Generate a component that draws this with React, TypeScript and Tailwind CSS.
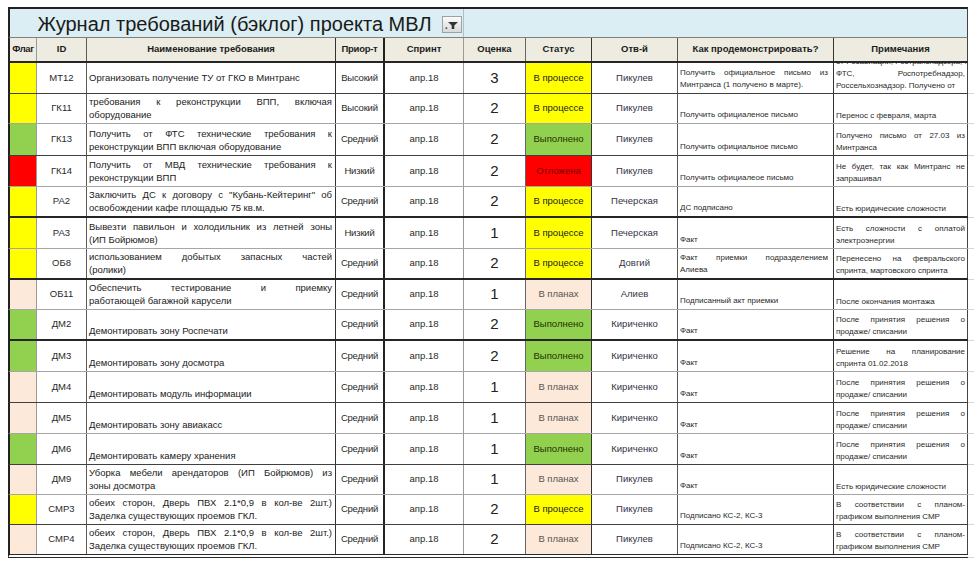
import React from "react";

type Row = {
  flag: string;
  id: string;
  name: string[];
  nameEnd?: boolean;
  prio: string;
  score: string;
  status: string;
  owner: string;
  demo: string[];
  note: string[];
  h: string;
  b: string;
};

const FLAG: Record<string, string> = {
  y: "bg-[#ffff00]",
  g: "bg-[#92d050]",
  r: "bg-[#ff0000]",
  p: "bg-[#fde9d9]",
};

const STATUS: Record<string, string> = {
  "В процессе": "bg-[#ffff00] text-[#1a1a1a]",
  "Выполнено": "bg-[#92d050] text-[#1e3300]",
  "Отложена": "bg-[#ff0000] text-[#7a0000]",
  "В планах": "bg-[#fde9d9] text-[#555555]",
};

const BORDER: Record<string, string> = {
  gray: "border-b border-[#a6a6a6]",
  dark: "border-b border-[#404040]",
  thick: "border-b-2 border-[#262626]",
  double: "border-b-4 border-double border-[#2a2a2a]",
};

const rows: Row[] = [
  { flag: "y", id: "МТ12", name: ["Организовать получение ТУ от ГКО в Минтранс"], prio: "Высокий", score: "3", status: "В процессе", owner: "Пикулев", demo: ["Получить официальное письмо из", "Минтранса (1 получено в марте)."], note: ["от Росавиации, Ространснадзора, МЧС,", "ФТС, Роспотребнадзор,", "Россельхознадзор. Получено от"], h: "h-[31px]", b: "dark" },
  { flag: "y", id: "ГК11", name: ["требования к реконструкции ВПП, включая", "оборудование"], prio: "Высокий", score: "2", status: "В процессе", owner: "Пикулев", demo: ["Получить официаленое письмо"], note: ["Перенос с февраля, марта"], h: "h-[30px]", b: "gray" },
  { flag: "g", id: "ГК13", name: ["Получить от ФТС технические требования к", "реконструкции ВПП включая оборудование"], prio: "Средний", score: "2", status: "Выполнено", owner: "Пикулев", demo: ["Получить официальное письмо"], note: ["Получено письмо от 27.03 из", "Минтранса"], h: "h-[32px]", b: "dark" },
  { flag: "r", id: "ГК14", name: ["Получить от МВД технические требования к", "реконструкции ВПП"], prio: "Низкий", score: "2", status: "Отложена", owner: "Пикулев", demo: ["Получить официалеое письмо"], note: ["Не будет, так как Минтранс не", "запрашивал"], h: "h-[31px]", b: "gray" },
  { flag: "y", id: "РА2", name: ["Заключить ДС к договору с \"Кубань-Кейтеринг\" об", "освобождении кафе площадью 75 кв.м."], prio: "Средний", score: "2", status: "В процессе", owner: "Печерская", demo: ["ДС подписано"], note: ["Есть юридические сложности"], h: "h-[31px]", b: "thick" },
  { flag: "y", id: "РА3", name: ["Вывезти павильон и холодильник из летней зоны", "(ИП Бойрюмов)"], prio: "Низкий", score: "1", status: "В процессе", owner: "Печерская", demo: ["Факт"], note: ["Есть сложности с оплатой", "электроэнергии"], h: "h-[31px]", b: "gray" },
  { flag: "y", id: "ОБ8", name: ["использованием добытых запасных частей", "(ролики)"], prio: "Средний", score: "2", status: "В процессе", owner: "Довгий", demo: ["Факт приемки подразделением", "Алиева"], note: ["Перенесено на февральского", "спринта, мартовского спринта"], h: "h-[31px]", b: "thick" },
  { flag: "p", id: "ОБ11", name: ["Обеспечить тестирование и приемку", "работающей багажной карусели"], prio: "Средний", score: "1", status: "В планах", owner: "Алиев", demo: ["Подписанный акт приемки"], note: ["После окончания монтажа"], h: "h-[30px]", b: "gray" },
  { flag: "g", id: "ДМ2", name: ["Демонтировать зону Роспечати"], nameEnd: true, prio: "Средний", score: "2", status: "Выполнено", owner: "Кириченко", demo: ["Факт"], note: ["После принятия решения о", "продаже/ списании"], h: "h-[31px]", b: "thick" },
  { flag: "g", id: "ДМ3", name: ["Демонтировать зону досмотра"], nameEnd: true, prio: "Средний", score: "2", status: "Выполнено", owner: "Кириченко", demo: ["Факт"], note: ["Решение на планирование", "спринта 01.02.2018"], h: "h-[31px]", b: "gray" },
  { flag: "p", id: "ДМ4", name: ["Демонтировать модуль информации"], nameEnd: true, prio: "Средний", score: "1", status: "В планах", owner: "Кириченко", demo: ["Факт"], note: ["После принятия решения о", "продаже/ списании"], h: "h-[31px]", b: "dark" },
  { flag: "p", id: "ДМ5", name: ["Демонтировать зону авиакасс"], nameEnd: true, prio: "Средний", score: "1", status: "В планах", owner: "Кириченко", demo: ["Факт"], note: ["После принятия решения о", "продаже/ списании"], h: "h-[31px]", b: "gray" },
  { flag: "g", id: "ДМ6", name: ["Демонтировать камеру хранения"], nameEnd: true, prio: "Средний", score: "1", status: "Выполнено", owner: "Кириченко", demo: ["Факт"], note: ["После принятия решения о", "продаже/ списании"], h: "h-[31px]", b: "dark" },
  { flag: "p", id: "ДМ9", name: ["Уборка мебели арендаторов (ИП Бойрюмов) из", "зоны досмотра"], prio: "Средний", score: "1", status: "В планах", owner: "Пикулев", demo: ["Факт"], note: ["Есть юридические сложности"], h: "h-[30px]", b: "gray" },
  { flag: "y", id: "СМР3", name: ["обеих сторон, Дверь ПВХ 2.1*0,9 в кол-ве 2шт.)", "Заделка существующих проемов ГКЛ."], prio: "Средний", score: "2", status: "В процессе", owner: "Пикулев", demo: ["Подписано КС-2, КС-3"], note: ["В соответствии с планом-", "графиком выполнения СМР"], h: "h-[30px]", b: "dark" },
  { flag: "p", id: "СМР4", name: ["обеих сторон, Дверь ПВХ 2.1*0,9 в кол-ве 2шт.)", "Заделка существующих проемов ГКЛ."], prio: "Средний", score: "2", status: "В планах", owner: "Пикулев", demo: ["Подписано КС-2, КС-3"], note: ["В соответствии с планом-", "графиком выполнения СМР"], h: "h-[33px]", b: "double" },
];

const GRID = "grid grid-cols-[27px_50px_249px_49px_79px_62px_66px_86px_156px_134px] w-[960px] border-l-2 border-l-[#222222]";

const C = {
  flag: "border-r border-r-[#9a9a9a]",
  id: "border-r border-r-[#5a5a5a]",
  name: "border-r border-r-[#333333]",
  prio: "border-r-2 border-r-[#222222]",
  sprint: "border-r border-r-[#9a9a9a]",
  score: "border-r border-r-[#666666]",
  status: "border-r border-r-[#333333]",
  owner: "border-r border-r-[#555555]",
  demo: "border-r border-r-[#333333]",
  note: "border-r border-r-[#444444]",
};

function Lines({ lines }: { lines: string[] }) {
  return (
    <>
      {lines.map((l, i) => (
        <div
          key={i}
          className={
            "whitespace-nowrap" +
            (i < lines.length - 1 ? " [text-align-last:justify] text-justify" : "")
          }
        >
          {l}
        </div>
      ))}
    </>
  );
}

function FilterIcon() {
  return (
    <svg width="18" height="15" viewBox="0 0 18 15">
      <polygon points="5,5 15,5 11.3,8.6 11.3,12 8.7,12 8.7,8.6" fill="#333333" />
      <rect x="2.6" y="10.4" width="1.6" height="1.6" fill="#444444" />
    </svg>
  );
}

export default function App() {
  return (
    <div className="w-[974px] h-[571px] bg-white pt-[7px] pl-[8px] overflow-hidden font-['Liberation_Sans',Arial,sans-serif] text-[#222222]">
      {/* title */}
      <div className="flex">
        <div className="flex w-[960px] h-[31px] border-t-2 border-t-[#222222] border-l-2 border-l-[#222222] border-r border-r-[#444444] border-b border-b-[#7f7f7f] bg-[#daeef3]">
          <div className="relative w-[454px] flex items-center justify-center border-r border-r-[#a9c3ca]">
            <span className="text-[20px] leading-none text-[#1a1a1a] pr-[4px] pt-[1px]">
              Журнал требований (бэклог) проекта МВЛ
            </span>
            <div className="absolute right-[1px] top-[7px] w-[20px] h-[17px] border border-[#a0a0a0] bg-linear-to-b from-[#fbfbfb] to-[#d9d9d9] flex items-center justify-center">
              <FilterIcon />
            </div>
          </div>
          <div className="flex-1" />
        </div>
      </div>

      {/* header */}
      <div className="flex">
        <div className={GRID + " h-[25px] bg-[#eeece1] border-b-2 border-b-[#262626] text-[9.5px] font-bold text-[#1c1c1c]"}>
          <div className={C.flag + " flex items-center justify-center tracking-[-0.4px]"}>Флаг</div>
          <div className={C.id + " flex items-center justify-center"}>ID</div>
          <div className={C.name + " flex items-center justify-center"}>Наименование требования</div>
          <div className={C.prio + " flex items-center justify-center tracking-[-0.3px]"}>Приор-т</div>
          <div className={C.sprint + " flex items-center justify-center"}>Спринт</div>
          <div className={C.score + " flex items-center justify-center"}>Оценка</div>
          <div className={C.status + " flex items-center justify-center"}>Статус</div>
          <div className={C.owner + " flex items-center justify-center"}>Отв-й</div>
          <div className={C.demo + " flex items-center justify-center"}>Как продемонстрировать?</div>
          <div className={C.note + " flex items-center justify-center"}>Примечания</div>
        </div>
        <div className="w-[6px]" />
      </div>

      {rows.map((r, i) => (
        <div key={i} className="flex">
          <div className={GRID + " " + r.h + " " + BORDER[r.b] + " text-[9.5px]"}>
            <div className={C.flag + " " + FLAG[r.flag]} />
            <div className={C.id + " flex items-center justify-center text-[#2a2a2a]"}>{r.id}</div>
            <div
              className={
                C.name +
                " flex flex-col overflow-hidden pl-[2px] pr-[3px] pb-[2px] leading-[13px] " +
                (r.nameEnd || r.name.length > 1 ? "justify-end" : "justify-center")
              }
            >
              <Lines lines={r.name} />
            </div>
            <div className={C.prio + " flex items-center justify-center text-[#2a2a2a] tracking-[-0.2px]"}>{r.prio}</div>
            <div className={C.sprint + " flex items-center justify-center text-[#2a2a2a]"}>апр.18</div>
            <div className={C.score + " flex items-center justify-center text-[15px] text-[#222222]"}>{r.score}</div>
            <div className={C.status + " flex items-center justify-center " + STATUS[r.status]}>{r.status}</div>
            <div className={C.owner + " flex items-center justify-center text-[#333344]"}>{r.owner}</div>
            <div className={C.demo + " flex flex-col justify-end overflow-hidden pl-[2px] pr-[5px] pb-[2px] text-[8px] leading-[12px] text-[#2a2a2a]"}>
              <Lines lines={r.demo} />
            </div>
            <div className={C.note + " flex flex-col justify-end overflow-hidden pl-[2px] pr-[2px] pb-[1px] text-[8px] leading-[12px] text-[#2a2a2a]"}>
              <Lines lines={r.note} />
            </div>
          </div>
          <div className={"w-[6px] " + r.h + " border-b border-b-[#d4d4d4]"} />
        </div>
      ))}
    </div>
  );
}
